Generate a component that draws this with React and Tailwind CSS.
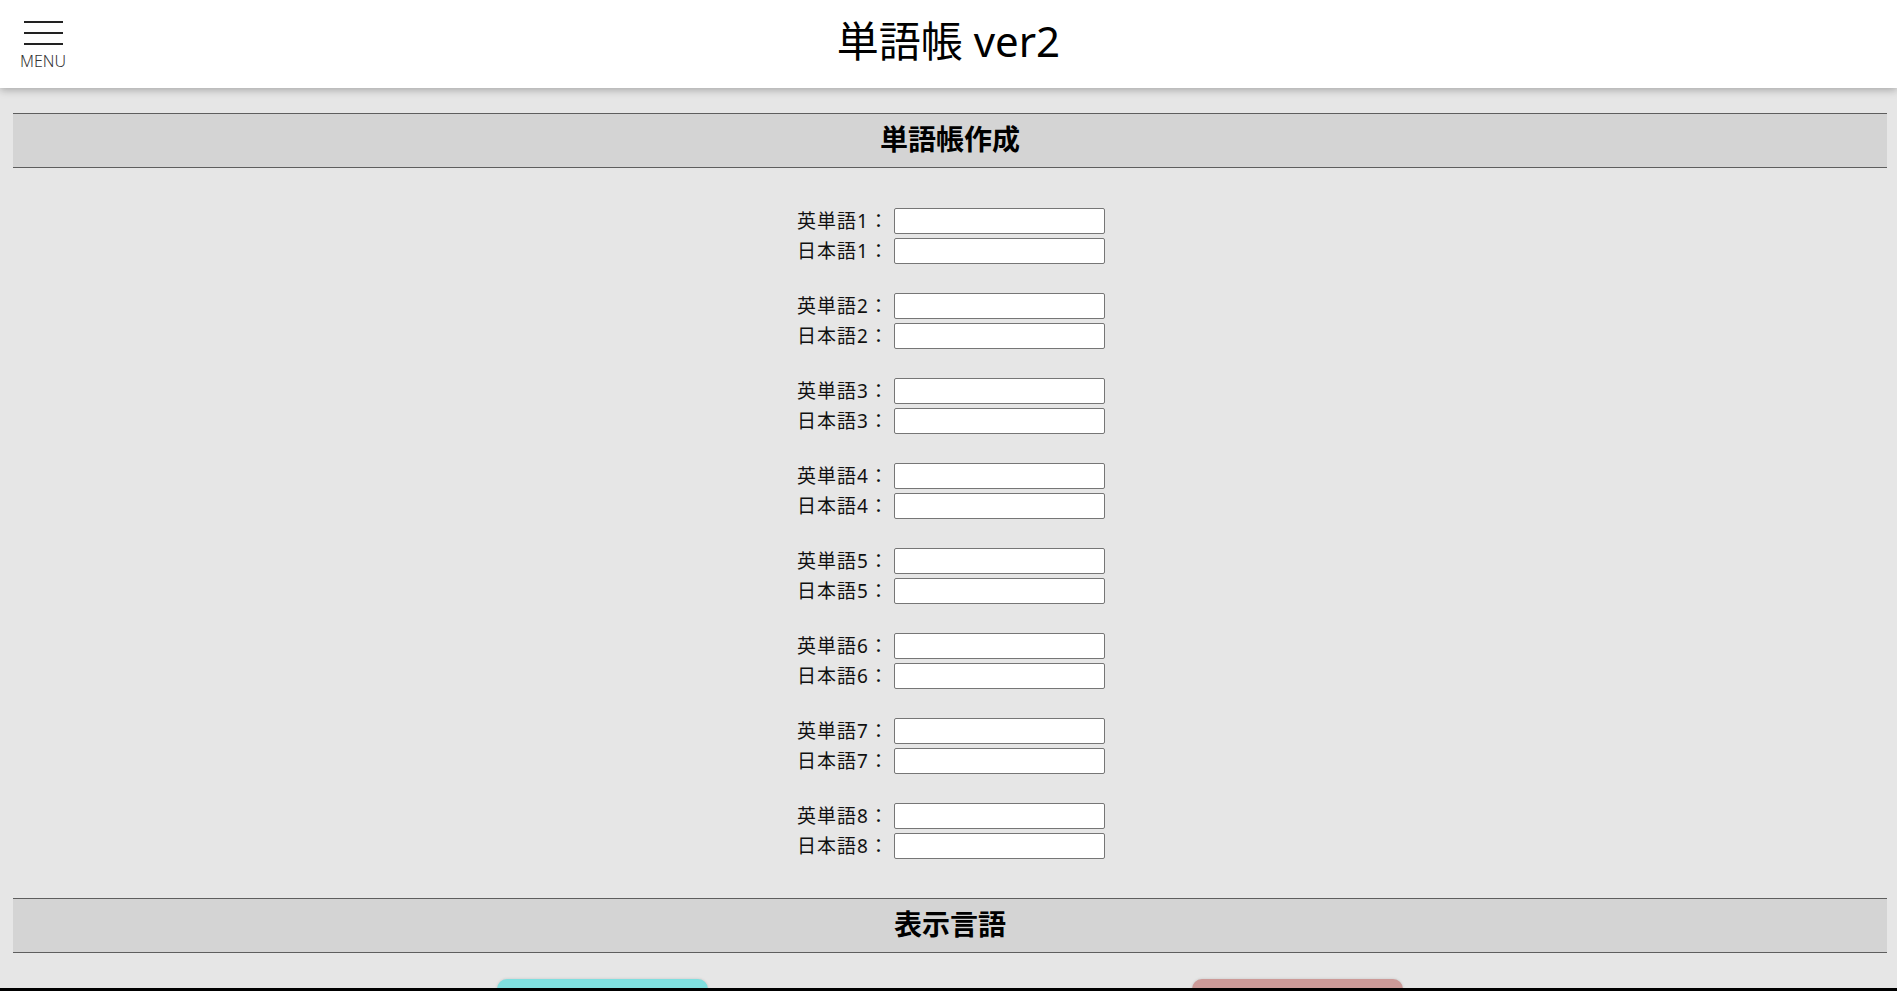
import React from "react";

const pairs = [1, 2, 3, 4, 5, 6, 7, 8];

function SectionHeader({ children }) {
  return (
    <div className="ml-[13px] mr-[10px] h-[55px] border-y border-[#5e5e5e] bg-[#d4d4d4] flex items-center justify-center">
      <h2 className="text-[28px] font-bold text-black leading-none -mt-[4px]">{children}</h2>
    </div>
  );
}

export default function App() {
  return (
    <div
      className="min-h-screen bg-[#e6e6e6] text-black"
      style={{ fontFamily: '"Noto Sans", "Noto Sans CJK JP", sans-serif' }}
    >
      <header className="relative h-[88px] bg-white shadow-[0_2px_8px_rgba(0,0,0,0.28)] flex items-center justify-center">
        <button className="absolute left-[20px] top-[21px] flex flex-col items-center">
          <span className="flex flex-col gap-[9px] w-[40px] items-center">
            <span className="block h-[2px] w-[39px] bg-[#222]" />
            <span className="block h-[2px] w-[39px] bg-[#222]" />
            <span className="block h-[2px] w-[39px] bg-[#222]" />
          </span>
          <span className="mt-[8px] text-[16px] leading-none font-light text-[#333]">MENU</span>
        </button>
        <h1 className="text-[42px] leading-none font-normal -mt-[6px]">単語帳 ver2</h1>
      </header>

      <div className="h-[25px]" />
      <SectionHeader>単語帳作成</SectionHeader>

      <div className="flex flex-col items-center pt-[40px] pb-[39px] gap-[29px] pl-[2px]">
        {pairs.map((n) => (
          <div key={n} className="flex flex-col gap-[4px]">
            <div className="flex items-center">
              <label className="w-[100px] pr-[5px] text-right text-[19px] tracking-[1px] leading-none text-[#111] whitespace-nowrap">英単語{n}：</label>
              <input className="w-[211px] h-[26px] bg-white border border-[#767676] rounded-[2px] outline-none px-1" />
            </div>
            <div className="flex items-center">
              <label className="w-[100px] pr-[5px] text-right text-[19px] tracking-[1px] leading-none text-[#111] whitespace-nowrap">日本語{n}：</label>
              <input className="w-[211px] h-[26px] bg-white border border-[#767676] rounded-[2px] outline-none px-1" />
            </div>
          </div>
        ))}
      </div>

      <SectionHeader>表示言語</SectionHeader>

      <div className="flex justify-center gap-[484px] pt-[26px] pl-[3px]">
        <button className="w-[211px] h-[50px] rounded-[10px] bg-[#80dfdf] shadow-[0_0_3px_rgba(0,0,0,0.15)]" />
        <button className="w-[211px] h-[50px] rounded-[10px] bg-[#cc9a98] shadow-[0_0_3px_rgba(0,0,0,0.15)]" />
      </div>

      <div className="fixed bottom-0 left-0 right-0 h-[3px] bg-black" />
    </div>
  );
}
